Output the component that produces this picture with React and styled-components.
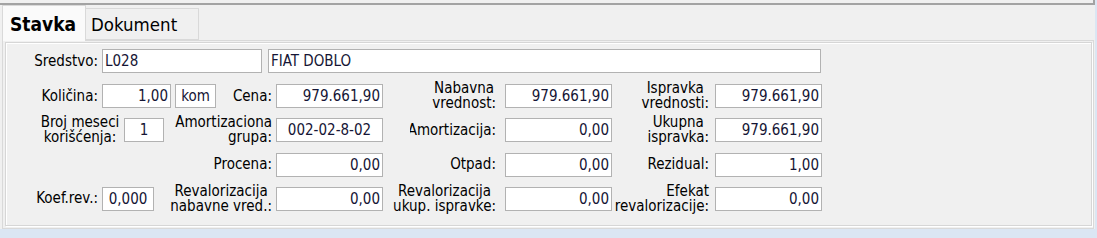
import React from 'react';
import styled, { createGlobalStyle } from 'styled-components';

const GlobalStyle = createGlobalStyle`
  html, body { margin: 0; padding: 0; background: #dbe6f3; }
  body { font-family: "DejaVu Sans Condensed", "DejaVu Sans", sans-serif; }
`;

const Window = styled.div`
  width: 1095px;
  height: 229px;
  background: #f0f0f0;
  box-sizing: border-box;
`;

const TopFrame = styled.div`
  height: 5px;
  box-sizing: border-box;
  border-bottom: 2px solid #a3a3a3;
  border-right: 2px solid #a3a3a3;
  margin-right: 0;
`;

const TabBar = styled.div`
  display: flex;
  align-items: flex-end;
  height: 35px;
  padding-left: 2px;
  position: relative;
  z-index: 1;
`;

const Tab = styled.div`
  box-sizing: border-box;
  width: ${p => p.$w}px;
  height: ${p => (p.$active ? 36 : 32)}px;
  margin-bottom: ${p => (p.$active ? -1 : 0)}px;
  padding-left: ${p => p.$pl}px;
  border: 1px solid #d9d9d9;
  border-bottom: ${p => (p.$active ? 'none' : '1px solid #d9d9d9')};
  border-left: ${p => (p.$active ? '1px solid #d9d9d9' : 'none')};
  background: ${p => (p.$active ? '#fafafa' : '#f0f0f0')};
  font-size: ${p => (p.$active ? 19 : 18.5)}px;
  font-weight: ${p => (p.$active ? 700 : 400)};
  color: #000;
  display: flex;
  align-items: center;
  padding-top: ${p => (p.$active ? 0 : 1)}px;
`;

const Panel = styled.div`
  box-sizing: border-box;
  margin-left: 2px;
  width: 1092px;
  height: 189px;
  border: 1px solid #d9d9d9;
  padding: 1px 1px 1px 2px;
`;

const GroupBox = styled.div`
  box-sizing: border-box;
  height: 184px;
  width: 1087px;
  border: 1px solid #d6d6d6;
  box-shadow: inset 1px 1px 0 #fff, 1px 1px 0 #fff;
  padding: 6px 0 0 2px;
  display: flex;
  flex-direction: column;
  gap: 11px;
`;

const Row = styled.div`
  display: flex;
  align-items: center;
  gap: ${p => p.$gap ?? 4}px;
  height: 24px;
`;

const Grid = styled.div`
  display: grid;
  grid-template-columns: 218px 50px 107px 122px 107px 103px 107px;
  grid-template-rows: repeat(4, 24px);
  row-gap: 10.33px;
`;

const Cell = styled.div`
  display: flex;
  align-items: center;
  gap: 4px;
  min-width: 0;
`;

const LabelCell = styled.div`
  display: flex;
  align-items: center;
  justify-content: flex-end;
  padding-right: ${p => p.$pr}px;
  min-width: 0;
`;

const Clip = styled.div`
  display: flex;
  justify-content: flex-end;
  max-width: ${p => p.$max}px;
  overflow: hidden;
`;

const Label = styled.div`
  flex-shrink: 0;
  width: ${p => (p.$w ? `${p.$w}px` : 'auto')};
  font-size: 15px;
  line-height: 15px;
  white-space: nowrap;
  text-align: ${p => p.$align || 'right'};
  color: #000;
`;

const Field = styled.div`
  box-sizing: border-box;
  flex-shrink: 0;
  width: ${p => p.$w}px;
  height: 24px;
  background: #fff;
  border: 1px solid #b2b2b2;
  font-size: 15px;
  line-height: 22px;
  padding: 0 2px 0 2px;
  color: #151535;
  white-space: nowrap;
  overflow: hidden;
  text-align: ${p => p.$align || 'right'};
`;

function Lbl({ children, pr, align, clip }) {
  const text = <Label $align={align}>{children}</Label>;
  return (
    <LabelCell $pr={pr}>
      {clip ? <Clip $max={clip}>{text}</Clip> : text}
    </LabelCell>
  );
}

const colPad = { b: 4, c: 9, d: 6 };

const rows = [
  {
    a: (
      <>
        <Label $w={90}>Količina:</Label>
        <Field $w={69}>1,00</Field>
        <Field $w={41} $align="center">kom</Field>
      </>
    ),
    b: ['Cena:', '979.661,90'],
    c: [<>Nabavna<br />vrednost:</>, '979.661,90', 'center'],
    d: [<>Ispravka<br />vrednosti:</>, '979.661,90', 'center'],
  },
  {
    a: (
      <>
        <Label $w={112} $align="center" style={{ paddingLeft: 32, boxSizing: 'border-box' }}>Broj meseci<br />korišćenja:</Label>
        <Field $w={40} $align="center">1</Field>
      </>
    ),
    b: [<>Amortizaciona<br />grupa:</>, '002-02-8-02', 'right', 'center'],
    c: ['Amortizacija:', '0,00', 'right', 'right', 86],
    d: [<>Ukupna<br />ispravka:</>, '979.661,90', 'center'],
  },
  {
    a: null,
    b: ['Procena:', '0,00'],
    c: ['Otpad:', '0,00'],
    d: ['Rezidual:', '1,00'],
  },
  {
    a: (
      <>
        <Label $w={90}>Koef.rev.:</Label>
        <Field $w={52} $align="center">0,000</Field>
      </>
    ),
    b: [<>Revalorizacija<br />nabavne vred.:</>, '0,00', 'center'],
    c: [<>Revalorizacija<br />ukup. ispravke:</>, '0,00', 'center'],
    d: [<>Efekat<br />revalorizacije:</>, '0,00', 'right'],
  },
];

export default function App() {
  return (
    <>
      <GlobalStyle />
      <Window>
        <TopFrame />
        <TabBar>
          <Tab $active $w={84} $pl={7}>Stavka</Tab>
          <Tab $w={113} $pl={5}>Dokument</Tab>
        </TabBar>
        <Panel>
          <GroupBox>
            <Row>
              <Label $w={90}>Sredstvo:</Label>
              <Field $w={160} $align="left">L028</Field>
              <Field $w={553} $align="left" style={{ marginLeft: 2 }}>FIAT DOBLO</Field>
            </Row>
            <Grid>
              {rows.map((r, i) => (
                <React.Fragment key={i}>
                  <Cell>{r.a}</Cell>
                  {['b', 'c', 'd'].map(k => {
                    const [label, value, align, valAlign, clip] = r[k];
                    return (
                      <React.Fragment key={k}>
                        <Lbl pr={colPad[k]} align={align} clip={clip}>{label}</Lbl>
                        <Cell>
                          <Field $w={107} $align={valAlign}>{value}</Field>
                        </Cell>
                      </React.Fragment>
                    );
                  })}
                </React.Fragment>
              ))}
            </Grid>
          </GroupBox>
        </Panel>
      </Window>
    </>
  );
}
